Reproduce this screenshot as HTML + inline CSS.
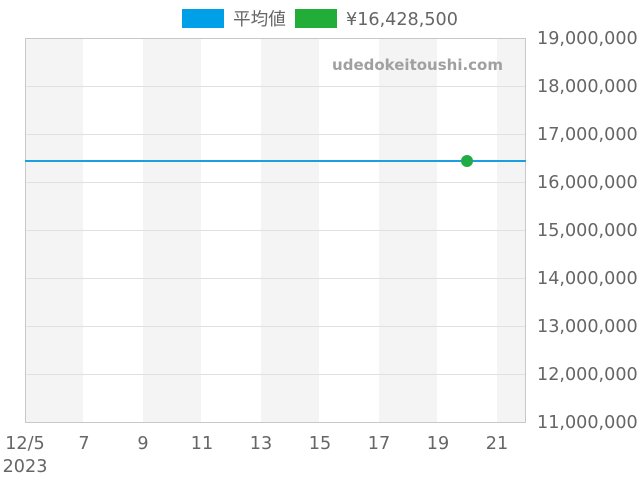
<!DOCTYPE html><html><head><style>body{margin:0;background:#fff}svg{display:block}</style></head><body>
<svg width="640" height="480" xmlns="http://www.w3.org/2000/svg" font-family="'DejaVu Sans','Liberation Sans','Noto Sans CJK JP',sans-serif">
<g fill="#f4f4f4">
<rect x="25" y="38" width="58" height="384"/><rect x="143" y="38" width="58" height="384"/><rect x="261" y="38" width="58" height="384"/><rect x="379" y="38" width="58" height="384"/><rect x="497" y="38" width="29" height="384"/>
</g>
<g stroke="#e0e0e0" stroke-width="1">
<line x1="25" x2="526" y1="86.5" y2="86.5"/><line x1="25" x2="526" y1="134.5" y2="134.5"/><line x1="25" x2="526" y1="182.5" y2="182.5"/><line x1="25" x2="526" y1="230.5" y2="230.5"/><line x1="25" x2="526" y1="278.5" y2="278.5"/><line x1="25" x2="526" y1="326.5" y2="326.5"/><line x1="25" x2="526" y1="374.5" y2="374.5"/>
</g>
<rect x="25.5" y="38.5" width="500" height="384" fill="none" stroke="#c8c8c8"/>
<line x1="25" x2="526" y1="161" y2="161" stroke="#1a9fe0" stroke-width="2"/>
<circle cx="467" cy="161" r="6" fill="#22aa44"/>
<text x="503" y="70" text-anchor="end" font-size="15" font-weight="bold" fill="#a0a0a0">udedokeitoushi.com</text>
<g font-size="17.6" fill="#666">
<text x="537" y="44">19,000,000</text><text x="537" y="92">18,000,000</text><text x="537" y="140">17,000,000</text><text x="537" y="188">16,000,000</text><text x="537" y="236">15,000,000</text><text x="537" y="284">14,000,000</text><text x="537" y="332">13,000,000</text><text x="537" y="380">12,000,000</text><text x="537" y="428">11,000,000</text>
</g>
<g font-size="17.6" fill="#666" text-anchor="middle">
<text x="25" y="449">12/5</text><text x="25" y="472">2023</text><text x="84" y="449">7</text><text x="143" y="449">9</text><text x="202" y="449">11</text><text x="261" y="449">13</text><text x="320" y="449">15</text><text x="379" y="449">17</text><text x="438" y="449">19</text><text x="497" y="449">21</text>
</g>
<rect x="182" y="9" width="42" height="19" fill="#00a0e9"/>
<text x="233" y="25" font-size="17.6" fill="#666">平均値</text>
<rect x="295" y="9" width="42" height="19" fill="#22ac38"/>
<text x="346" y="25" font-size="17.6" fill="#666">¥16,428,500</text>
</svg>
</body></html>
